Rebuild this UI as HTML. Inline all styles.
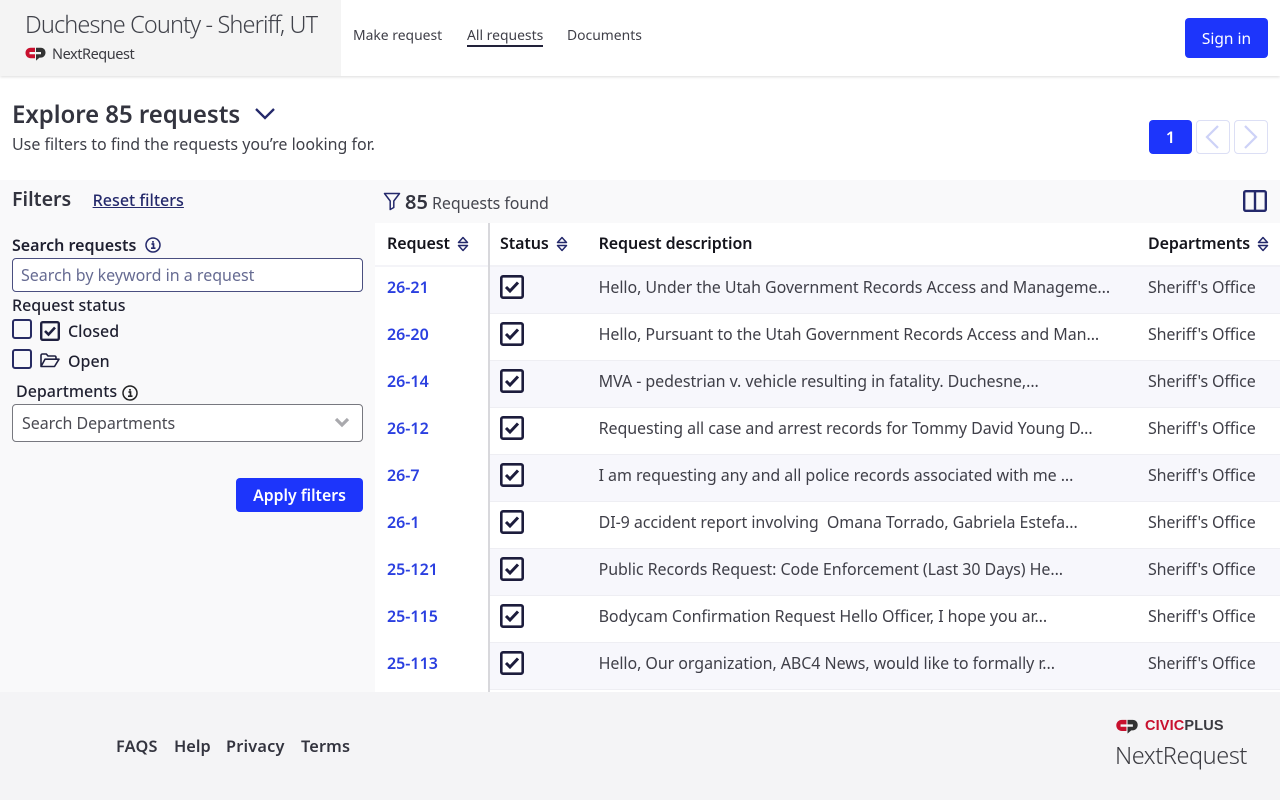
<!DOCTYPE html>
<html lang="en"><head><meta charset="utf-8"><title>Explore requests</title>
<style>
html,body{margin:0;padding:0;width:1280px;height:800px;overflow:hidden;background:#fff}
body{position:relative;font-family:"Noto Sans","DejaVu Sans","Liberation Sans",sans-serif;color:#3a3a45}
.t{position:absolute;white-space:nowrap;line-height:20px;font-size:16px}
.b{position:absolute}
svg{position:absolute;overflow:visible}
.lnk{color:#2a3fe0;font-weight:600;font-size:16px}
.st{font-size:16px;color:#3f3f48;letter-spacing:-.065px}
.dp{letter-spacing:-.13px}
.hd{font-weight:600;color:#14141c;font-size:16px;letter-spacing:-.1px}
.r{position:absolute;left:490px;width:790px;height:46px;border-bottom:1px solid #eeeef3}
</style></head><body>
<div class="b" style="left:0;top:0;width:1280px;height:76px;background:#fff;box-shadow:0 1px 3px rgba(0,0,0,.14)"></div>
<div class="b" style="left:0;top:0;width:341px;height:76px;background:#f4f4f4"></div>
<div class="t" style="left:25px;top:9px;line-height:30px;font-size:23.500px;font-weight:300;color:#40424a;letter-spacing:-.88px">Duchesne County - Sheriff, UT</div>
<svg style="left:25px;top:47px" width="21" height="14" viewBox="0 0 21 14"><path d="M10 .8H5.800C2.600.8.500 3.100.500 6s2.100 5.200 5.300 5.200H10V7.200H4.500V5H10Z" fill="#c8102e"/><path d="M11 .8h4.800c2.900 0 4.700 2.200 4.700 4.800s-1.900 5-4.700 5h-1.300L11 13.600V7.200h5V5h-5Z" fill="#333"/></svg>
<div class="t" style="left:52px;top:44px;font-size:14.500px;color:#3c3c42;letter-spacing:-.45px">NextRequest</div>
<div class="t" style="left:353px;top:25px;font-size:13.900px;line-height:22px;color:#3f3f48">Make request</div>
<div class="t" style="left:467px;top:25px;font-size:13.900px;line-height:22px;color:#3f3f48">All requests</div>
<div class="b" style="left:467px;top:45px;width:76px;height:2px;background:#22223a"></div>
<div class="t" style="left:567px;top:25px;font-size:13.900px;line-height:22px;color:#3f3f48">Documents</div>
<div class="b" style="left:1185px;top:18px;width:83px;height:40px;background:#1d35fb;border-radius:4px"></div>
<div class="t" style="left:1185px;top:28px;width:83px;text-align:center;color:#fff;font-size:15.500px">Sign in</div>

<div class="t" style="left:12px;top:100px;line-height:30px;font-size:24px;font-weight:600;color:#33343f;letter-spacing:-.05px">Explore 85 requests</div>
<svg style="left:254px;top:107px" width="22" height="14" viewBox="0 0 22 14"><path d="M2 2l9 9 9-9" fill="none" stroke="#24296b" stroke-width="2.300"/></svg>
<div class="t" style="left:12px;top:134px;font-size:16px;color:#3f4049;letter-spacing:-.02px">Use filters to find the requests you’re looking for.</div>
<div class="b" style="left:1149px;top:120px;width:43px;height:34px;background:#1d35fb;border-radius:4px"></div>
<div class="t" style="left:1149px;top:127px;width:43px;text-align:center;color:#fff;font-weight:600;font-size:16px">1</div>
<div class="b" style="left:1196px;top:120px;width:32px;height:32px;border:1px solid #dcdff5;border-radius:4px"></div>
<div class="b" style="left:1234px;top:120px;width:32px;height:32px;border:1px solid #dcdff5;border-radius:4px"></div>
<svg style="left:1196px;top:120px" width="34" height="34"><path d="M22 6L11 17l11 11" fill="none" stroke="#cdd2f7" stroke-width="2.200"/></svg>
<svg style="left:1234px;top:120px" width="34" height="34"><path d="M11 6l11 11-11 11" fill="none" stroke="#cdd2f7" stroke-width="2.200"/></svg>

<div class="b" style="left:0;top:180px;width:1280px;height:512px;background:#f9f9fa"></div>
<div class="t" style="left:12px;top:189px;font-size:19.600px;font-weight:600;color:#33343f">Filters</div>
<div class="t" style="left:92.600px;top:190px;font-size:16.100px;font-weight:500;color:#24296b;text-decoration:underline">Reset filters</div>
<div class="t" style="left:12px;top:235px;font-size:16px;font-weight:600;color:#1f2030">Search requests</div>
<svg style="left:145px;top:237px" width="16" height="16" viewBox="0 0 16 16"><circle cx="8" cy="8" r="7" fill="none" stroke="#24296b" stroke-width="1.500"/><path d="M6.500 7h2v4M6 11.200h4.500M8 4v1.800" fill="none" stroke="#24296b" stroke-width="1.700"/></svg>
<div class="b" style="left:12px;top:258px;width:349px;height:32px;background:#fff;border:1px solid #4a4f80;border-radius:4px"></div>
<div class="t" style="left:21px;top:265px;font-size:16px;color:#666b92">Search by keyword in a request</div>
<div class="t" style="left:12px;top:295px;font-size:16px;font-weight:500;color:#1f2030">Request status</div>
<div class="b" style="left:12px;top:319px;width:16px;height:16px;border:2px solid #272b63;border-radius:3px"></div>
<svg style="left:40px;top:321px" width="20" height="20" viewBox="0 0 20 20"><rect x="1.200" y="1.200" width="17.600" height="17.600" rx="1.500" fill="none" stroke="#1f2040" stroke-width="2.400"/><path d="M5 10l3.500 3.500L15 6.500" fill="none" stroke="#1f2040" stroke-width="2.600"/></svg>
<div class="t" style="left:68px;top:321px;font-size:16px;font-weight:500;color:#1f2030">Closed</div>
<div class="b" style="left:12px;top:349px;width:16px;height:16px;border:2px solid #272b63;border-radius:3px"></div>
<svg style="left:40px;top:353px" width="20" height="15" viewBox="0 0 20 15"><path d="M1 13V2.500C1 1.600 1.600 1 2.500 1h3.800l1.700 2h6.500c.9 0 1.500.6 1.500 1.500V6M1 13.500h13.500L19 6.200H5L1 13.500Z" fill="none" stroke="#1f2040" stroke-width="1.600" stroke-linejoin="round"/></svg>
<div class="t" style="left:68px;top:351px;font-size:16px;font-weight:500;color:#1f2030">Open</div>
<div class="t" style="left:16px;top:381px;font-size:16px;font-weight:500;color:#1f2030">Departments</div>
<svg style="left:121.500px;top:384.500px" width="16" height="16" viewBox="0 0 16 16"><circle cx="8" cy="8" r="7" fill="none" stroke="#222" stroke-width="1.500"/><path d="M6.500 7h2v4M6 11.200h4.500M8 4v1.800" fill="none" stroke="#222" stroke-width="1.700"/></svg>
<div class="b" style="left:12px;top:404px;width:349px;height:36px;background:#fff;border:1px solid #77787f;border-radius:4px"></div>
<div class="t" style="left:22px;top:413px;font-size:16px;color:#4a4a52;letter-spacing:-.05px">Search Departments</div>
<svg style="left:334px;top:416px" width="16" height="13" viewBox="0 0 16 13"><path d="M2 3l6 6 6-6" fill="none" stroke="#a9a9ad" stroke-width="3.200"/></svg>
<div class="b" style="left:236px;top:478px;width:127px;height:34px;background:#1d35fb;border-radius:4px"></div>
<div class="t" style="left:236px;top:485px;width:127px;text-align:center;color:#fff;font-size:15.800px;font-weight:600">Apply filters</div>

<svg style="left:383px;top:192px" width="18" height="19" viewBox="0 0 18 19"><path d="M1.500 1.500h15l-5.700 7.500v6.500l-3.600 2V9Z" fill="none" stroke="#24296b" stroke-width="1.500" stroke-linejoin="round"/></svg>
<div class="t" style="left:405px;top:191px;font-size:20px;line-height:22px;font-weight:600;color:#33343f">85</div>
<div class="t" style="left:432px;top:193px;font-size:16px;color:#45464f;letter-spacing:-.07px">Requests found</div>
<svg style="left:1243px;top:190px" width="24" height="22" viewBox="0 0 24 22"><rect x="1.200" y="1.200" width="21.600" height="19.600" rx="1.500" fill="none" stroke="#24296b" stroke-width="2.400"/><path d="M12 1v20" stroke="#24296b" stroke-width="2.400"/></svg>

<div class="b" style="left:375px;top:223px;width:905px;height:469px;background:#fff"></div>
<div class="b" style="left:490px;top:265px;width:790px;height:2px;background:#f1f1f6"></div>
<div class="b" style="left:375px;top:265px;width:113px;height:2px;background:#f4f4f8"></div>
<div class="b" style="left:488px;top:223px;width:2px;height:469px;background:#d8d8dc"></div>
<div class="t hd" style="left:387px;top:233px">Request</div>
<div class="t hd" style="left:500px;top:233px">Status</div>
<div class="t hd" style="left:598.600px;top:233px">Request description</div>
<div class="t hd" style="left:1148px;top:233px">Departments</div>
<svg style="left:457px;top:236px" width="12" height="16" viewBox="0 0 12 16"><path d="M6 1.500L10.500 6.500H1.500ZM1.500 9.500H10.500L6 14.500Z" fill="none" stroke="#24296b" stroke-width="1.500" stroke-linejoin="round"/></svg>
<svg style="left:556px;top:236px" width="12" height="16" viewBox="0 0 12 16"><path d="M6 1.500L10.500 6.500H1.500ZM1.500 9.500H10.500L6 14.500Z" fill="none" stroke="#24296b" stroke-width="1.500" stroke-linejoin="round"/></svg>
<svg style="left:1257px;top:236px" width="12" height="16" viewBox="0 0 12 16"><path d="M6 1.500L10.500 6.500H1.500ZM1.500 9.500H10.500L6 14.500Z" fill="none" stroke="#24296b" stroke-width="1.500" stroke-linejoin="round"/></svg>

<div class="r" style="top:267px;background:#f7f7fc"></div>
<div class="r" style="top:314px;background:#fff"></div>
<div class="r" style="top:361px;background:#f7f7fc"></div>
<div class="r" style="top:408px;background:#fff"></div>
<div class="r" style="top:455px;background:#f7f7fc"></div>
<div class="r" style="top:502px;background:#fff"></div>
<div class="r" style="top:549px;background:#f7f7fc"></div>
<div class="r" style="top:596px;background:#fff"></div>
<div class="r" style="top:643px;background:#f7f7fc"></div>

<svg width="0" height="0"><defs><g id="c"><rect x="1.300" y="1.300" width="21.400" height="21.400" rx="1.800" fill="#fff" stroke="#1c1c3c" stroke-width="2.600"/><path d="M6 12l4 4 8-8.500" fill="none" stroke="#1c1c3c" stroke-width="3"/></g></defs></svg>

<div class="t lnk" style="left:387px;top:277px">26-21</div><svg style="left:500px;top:275px" width="24" height="24"><use href="#c"/></svg><div class="t st" style="left:598.600px;top:277px">Hello, Under the Utah Government Records Access and Manageme...</div><div class="t st dp" style="left:1148px;top:277px">Sheriff's Office</div>
<div class="t lnk" style="left:387px;top:324px">26-20</div><svg style="left:500px;top:322px" width="24" height="24"><use href="#c"/></svg><div class="t st" style="left:598.600px;top:324px">Hello, Pursuant to the Utah Government Records Access and Man...</div><div class="t st dp" style="left:1148px;top:324px">Sheriff's Office</div>
<div class="t lnk" style="left:387px;top:371px">26-14</div><svg style="left:500px;top:369px" width="24" height="24"><use href="#c"/></svg><div class="t st" style="left:598.600px;top:371px">MVA - pedestrian v. vehicle resulting in fatality. Duchesne,...</div><div class="t st dp" style="left:1148px;top:371px">Sheriff's Office</div>
<div class="t lnk" style="left:387px;top:418px">26-12</div><svg style="left:500px;top:416px" width="24" height="24"><use href="#c"/></svg><div class="t st" style="left:598.600px;top:418px">Requesting all case and arrest records for Tommy David Young D...</div><div class="t st dp" style="left:1148px;top:418px">Sheriff's Office</div>
<div class="t lnk" style="left:387px;top:465px">26-7</div><svg style="left:500px;top:463px" width="24" height="24"><use href="#c"/></svg><div class="t st" style="left:598.600px;top:465px">I am requesting any and all police records associated with me ...</div><div class="t st dp" style="left:1148px;top:465px">Sheriff's Office</div>
<div class="t lnk" style="left:387px;top:512px">26-1</div><svg style="left:500px;top:510px" width="24" height="24"><use href="#c"/></svg><div class="t st" style="left:598.600px;top:512px;white-space:pre">DI-9 accident report involving  Omana Torrado, Gabriela Estefa...</div><div class="t st dp" style="left:1148px;top:512px">Sheriff's Office</div>
<div class="t lnk" style="left:387px;top:559px">25-121</div><svg style="left:500px;top:557px" width="24" height="24"><use href="#c"/></svg><div class="t st" style="left:598.600px;top:559px">Public Records Request: Code Enforcement (Last 30 Days) He...</div><div class="t st dp" style="left:1148px;top:559px">Sheriff's Office</div>
<div class="t lnk" style="left:387px;top:606px">25-115</div><svg style="left:500px;top:604px" width="24" height="24"><use href="#c"/></svg><div class="t st" style="left:598.600px;top:606px">Bodycam Confirmation Request Hello Officer, I hope you ar...</div><div class="t st dp" style="left:1148px;top:606px">Sheriff's Office</div>
<div class="t lnk" style="left:387px;top:653px">25-113</div><svg style="left:500px;top:651px" width="24" height="24"><use href="#c"/></svg><div class="t st" style="left:598.600px;top:653px">Hello, Our organization, ABC4 News, would like to formally r...</div><div class="t st dp" style="left:1148px;top:653px">Sheriff's Office</div>

<div class="b" style="left:0;top:692px;width:1280px;height:108px;background:#f4f4f6"></div>
<div class="t" style="left:116px;top:736px;font-size:16.300px;font-weight:600;color:#33343f;letter-spacing:.2px">FAQS</div>
<div class="t" style="left:174px;top:736px;font-size:16.300px;font-weight:600;color:#33343f">Help</div>
<div class="t" style="left:226px;top:736px;font-size:16.300px;font-weight:600;color:#33343f;letter-spacing:.2px">Privacy</div>
<div class="t" style="left:301px;top:736px;font-size:16.300px;font-weight:600;color:#33343f;letter-spacing:.15px">Terms</div>
<svg style="left:1115px;top:719px" width="24" height="15" viewBox="0 0 21 14"><path d="M10 .8H5.800C2.600.8.500 3.100.500 6s2.100 5.200 5.300 5.200H10V7.200H4.500V5H10Z" fill="#c8102e"/><path d="M11 .8h4.800c2.900 0 4.700 2.200 4.700 4.800s-1.900 5-4.700 5h-1.300L11 13.600V7.200h5V5h-5Z" fill="#333"/></svg>
<div class="t" style="left:1145px;top:716px;font-size:14.500px;font-weight:700;font-family:'Liberation Sans',sans-serif;letter-spacing:.15px;color:#c8102e">CIVIC<span style="color:#3a3a40">PLUS</span></div>
<div class="t" style="left:1115px;top:740px;line-height:30px;font-size:23.500px;font-weight:300;color:#3c3c42;letter-spacing:-.42px">NextRequest</div>
</body></html>
